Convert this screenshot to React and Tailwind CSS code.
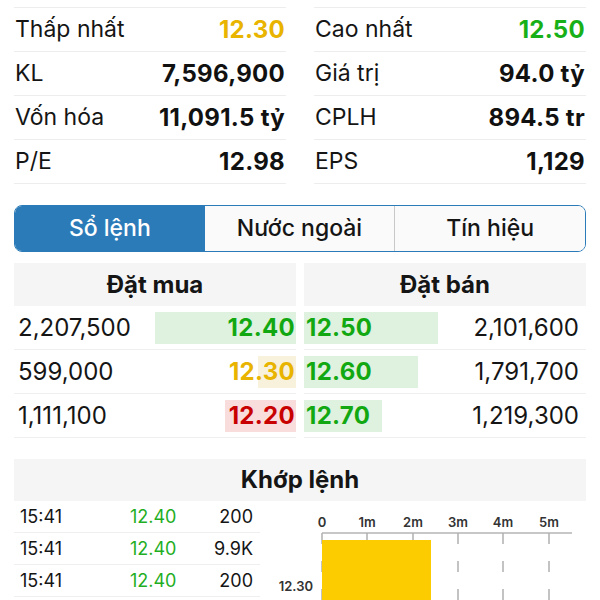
import React from "react";

const stats = [
  [
    ["Thấp nhất", "12.30", "text-[#e8b400] font-bold"],
    ["KL", "7,596,900", "text-[#111] font-bold"],
    ["Vốn hóa", "11,091.5 tỷ", "text-[#111] font-bold"],
    ["P/E", "12.98", "text-[#111] font-bold"],
  ],
  [
    ["Cao nhất", "12.50", "text-[#18b018] font-bold"],
    ["Giá trị", "94.0 tỷ", "text-[#111] font-bold"],
    ["CPLH", "894.5 tr", "text-[#111] font-bold"],
    ["EPS", "1,129", "text-[#111] font-bold"],
  ],
];

const buys = [
  { qty: "2,207,500", price: "12.40", bar: 141, color: "text-[#12a812]", bg: "bg-[#dff2df]" },
  { qty: "599,000", price: "12.30", bar: 38, color: "text-[#e8b400]", bg: "bg-[#f8f1dc]" },
  { qty: "1,111,100", price: "12.20", bar: 71, color: "text-[#c80000]", bg: "bg-[#f9dcdc]" },
];

const sells = [
  { qty: "2,101,600", price: "12.50", bar: 134 },
  { qty: "1,791,700", price: "12.60", bar: 114 },
  { qty: "1,219,300", price: "12.70", bar: 78 },
];

const trades = [
  ["15:41", "12.40", "200"],
  ["15:41", "12.40", "9.9K"],
  ["15:41", "12.40", "200"],
];

function StatColumn({ rows }) {
  return (
    <div className="border-t border-[#ededed]">
      {rows.map(([label, value, cls]) => (
        <div key={label} className="flex items-center justify-between h-[44px] border-b border-[#ededed] pl-[1px] pr-[1px]">
          <span className="text-[23px] text-[#151515]">{label}</span>
          <span className={"text-[24px] tracking-[0.3px] " + cls}>{value}</span>
        </div>
      ))}
    </div>
  );
}

function Chart() {
  const xs = [62, 107, 153, 198, 243, 289];
  const labels = ["0", "1m", "2m", "3m", "4m", "5m"];
  return (
    <svg width="326" height="100" className="block">
      {labels.map((l, i) => (
        <text key={l} x={xs[i]} y="26" textAnchor="middle" fontSize="13" fontWeight="600" fill="#333" fontFamily="Inter, sans-serif">
          {l}
        </text>
      ))}
      <line x1="62" y1="32" x2="312" y2="32" stroke="#b5b5b5" strokeWidth="1.5" />
      {xs.map((x) => (
        <line key={x} x1={x} y1="32" x2={x} y2="100" stroke="#b0b0b0" strokeWidth="1.5" strokeDasharray="11 17" />
      ))}
      <rect x="62" y="39" width="109" height="61" fill="#fccb00" />
      <text x="53" y="90" textAnchor="end" fontSize="13" fontWeight="600" fill="#333" fontFamily="Inter, sans-serif">
        12.30
      </text>
    </svg>
  );
}

export default function App() {
  return (
    <div className="w-[600px] h-[600px] overflow-hidden bg-white px-[14px] pt-[7px] font-['Inter',sans-serif] text-[#151515]">
      <div className="grid grid-cols-2 gap-x-[28px]">
        <StatColumn rows={stats[0]} />
        <StatColumn rows={stats[1]} />
      </div>

      <div className="mt-[21px] flex h-[47px] rounded-[8px] border-[1.5px] border-[#2b7bb8] overflow-hidden">
        <div className="flex-1 flex items-center justify-center bg-[#2b7bb8] text-white text-[23px] font-medium">Sổ lệnh</div>
        <div className="flex-1 flex items-center justify-center bg-[#fafafa] text-[23px] font-medium border-r border-[#c9c9c9]">Nước ngoài</div>
        <div className="flex-1 flex items-center justify-center bg-[#fafafa] text-[23px] font-medium">Tín hiệu</div>
      </div>

      <div className="mt-[11px] grid grid-cols-2 gap-x-[8px]">
        <div>
          <div className="h-[43px] bg-[#f5f5f5] flex items-center justify-center text-[24px] font-bold">Đặt mua</div>
          {buys.map((r) => (
            <div key={r.price} className="relative h-[44px] border-b border-[#efefef] flex items-center justify-between">
              <div className={"absolute right-0 top-[6px] bottom-[5px] " + r.bg} style={{ width: r.bar }} />
              <span className="relative pl-[4px] text-[24px]">{r.qty}</span>
              <span className={"relative pr-[1px] text-[24px] font-bold tracking-[0.3px] " + r.color}>{r.price}</span>
            </div>
          ))}
        </div>
        <div>
          <div className="h-[43px] bg-[#f5f5f5] flex items-center justify-center text-[24px] font-bold">Đặt bán</div>
          {sells.map((r) => (
            <div key={r.price} className="relative h-[44px] border-b border-[#efefef] flex items-center justify-between">
              <div className="absolute left-0 top-[6px] bottom-[5px] bg-[#dff2df]" style={{ width: r.bar }} />
              <span className="relative pl-[2px] text-[24px] font-bold tracking-[0.3px] text-[#12a812]">{r.price}</span>
              <span className="relative pr-[7px] text-[24px]">{r.qty}</span>
            </div>
          ))}
        </div>
      </div>

      <div className="mt-[21px] h-[42px] bg-[#f5f5f5] flex items-center justify-center text-[24px] font-bold">Khớp lệnh</div>

      <div className="flex">
        <div className="w-[246px]">
          {trades.map(([t, p, q], i) => (
            <div key={i} className="h-[32px] flex items-center border-b border-[#efefef] text-[18px]">
              <span className="w-[116px] pl-[6px]">{t}</span>
              <span className="w-[60px] text-[#1fae1f]">{p}</span>
              <span className="flex-1 text-right pr-[7px]">{q}</span>
            </div>
          ))}
        </div>
        <Chart />
      </div>
    </div>
  );
}
